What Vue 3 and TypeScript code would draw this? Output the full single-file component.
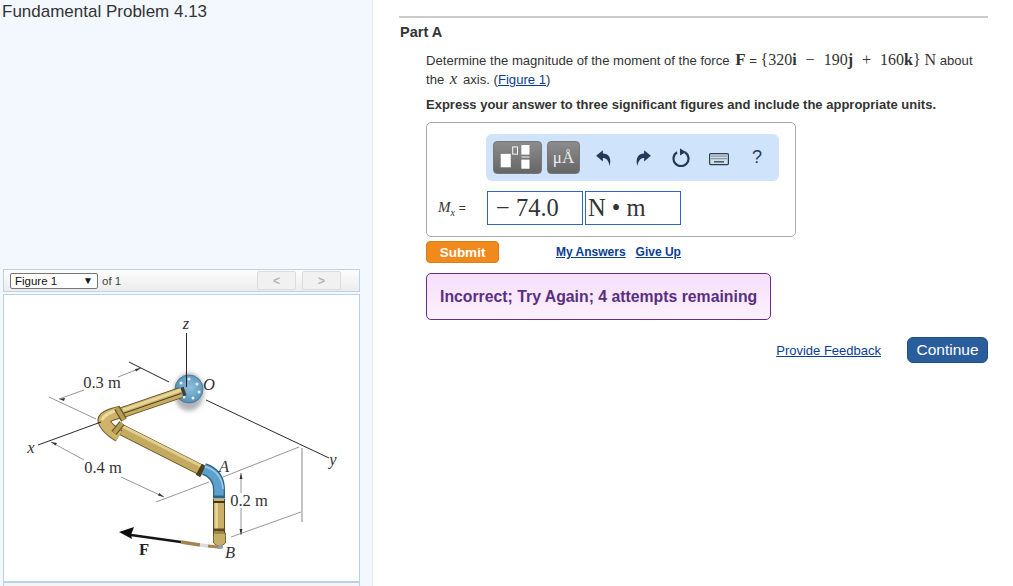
<script setup lang="ts">
const labels = [
  { t: 'z', x: 185, y: 329, cls: 'it' },
  { t: 'O', x: 208, y: 390, cls: 'it' },
  { t: '0.3 m', x: 101, y: 388, cls: '' },
  { t: '0.4 m', x: 102, y: 473, cls: '' },
  { t: '0.2 m', x: 248, y: 506, cls: '' },
  { t: 'x', x: 30, y: 453, cls: 'it' },
  { t: 'y', x: 332, y: 465, cls: 'it' },
  { t: 'A', x: 223, y: 472, cls: 'it' },
  { t: 'B', x: 229, y: 558, cls: 'it' },
  { t: 'F', x: 143, y: 555, cls: 'bd' },
]

const blackLines = [
  [128, 362, 168, 382],
  [205, 400, 328, 458],
  [37, 445, 100, 422],
  [185.5, 333, 185.5, 387],
]

const grayLines = [
  [48, 397, 95, 419],
  [58, 399, 83, 390],
  [117, 377, 140, 368],
  [50, 442, 83, 460],
  [120, 477, 163, 497],
  [155, 502, 208, 482],
  [222, 477, 298, 447],
  [230, 537, 300, 512],
  [240, 473, 240, 493],
  [240, 508, 240, 535],
]

const bolts = [
  [180, 383], [188, 379], [196, 384], [198, 392], [192, 398], [183, 397],
]
</script>

<template>
  <div class="page">
    <aside class="left">
      <h1 class="title">Fundamental Problem 4.13</h1>
      <div class="fig-bar">
        <div class="select">
          <span>Figure 1</span>
          <span class="caret">▼</span>
        </div>
        <span class="of">of 1</span>
        <div class="pager">
          <button class="page-btn">&lt;</button>
          <button class="page-btn">&gt;</button>
        </div>
      </div>
      <div class="fig-box">
        <svg class="fig" viewBox="3 295 355 286" width="355" height="286">
          <defs>
            <radialGradient id="flange" cx="0.55" cy="0.45" r="0.6">
              <stop offset="0" stop-color="#8fc0dc" />
              <stop offset="1" stop-color="#4f8cb4" />
            </radialGradient>
            <filter id="soft" x="-20%" y="-20%" width="140%" height="140%">
              <feGaussianBlur stdDeviation="0.35" />
            </filter>
            <filter id="shadow" x="-30%" y="-30%" width="160%" height="160%">
              <feGaussianBlur stdDeviation="2" />
            </filter>
          </defs>

          <g stroke="#8a8a8a" stroke-width="0.9" fill="none">
            <line v-for="(l, i) in grayLines" :key="i" :x1="l[0]" :y1="l[1]" :x2="l[2]" :y2="l[3]" />
          </g>
          <line x1="301" y1="448" x2="301" y2="522" stroke="#aaa" stroke-width="1.4" />
          <g fill="#333">
            <path d="M58 399l6-1-1 3zM140 368l-6 1 1 2.500zM50 442l6 1-1.500 2.500zM163 497l-6-1.500 1.200-2.500zM240 473l-1.500 6h3zM240 535l-1.500-6h3z" />
          </g>

          <g filter="url(#soft)">
            <ellipse cx="188" cy="392" rx="15" ry="19" fill="#b4b4b8" filter="url(#shadow)" />
            <ellipse cx="188" cy="389" rx="14" ry="14" fill="url(#flange)" stroke="#3d6f94" stroke-width="0.8" />
            <circle v-for="(b, i) in bolts" :key="i" :cx="b[0]" :cy="b[1]" r="1.500" fill="#e8eef2" />

            <!-- pipe O to elbow -->
            <line x1="180" y1="392.500" x2="120" y2="413" stroke="#5e4d22" stroke-width="11" />
            <line x1="180" y1="392.500" x2="120" y2="413" stroke="#c6ab63" stroke-width="9.500" />
            <line x1="180" y1="390" x2="122" y2="410" stroke="#e6d698" stroke-width="3" />
            <line x1="180" y1="393.500" x2="122" y2="413.500" stroke="#4a3c18" stroke-width="1" />
            <line x1="181" y1="392" x2="184" y2="391" stroke="#3f3a2a" stroke-width="9" />

            <!-- pipe elbow to A -->
            <line x1="117" y1="428" x2="200" y2="470" stroke="#5e4d22" stroke-width="11" />
            <line x1="117" y1="428" x2="200" y2="470" stroke="#c4a960" stroke-width="9.500" />
            <line x1="119" y1="425" x2="201" y2="466.500" stroke="#e3d08e" stroke-width="2.800" />

            <!-- elbow -->
            <path d="M120 412Q102 416 103 421Q105 428 118 436" fill="none" stroke="#6a5827" stroke-width="13" stroke-linecap="butt" />
            <path d="M120 412Q102 416 103 421Q105 428 118 436" fill="none" stroke="#cfb36a" stroke-width="11" />
            <path d="M120 409Q104 413 101 420" fill="none" stroke="#ecdca0" stroke-width="3" />
            <line x1="116" y1="408" x2="123" y2="420" stroke="#6b5a28" stroke-width="6.500" />
            <line x1="116" y1="408" x2="123" y2="420" stroke="#b79c54" stroke-width="4" />
            <line x1="113" y1="433" x2="121" y2="423" stroke="#6b5a28" stroke-width="6.500" />
            <line x1="113" y1="433" x2="121" y2="423" stroke="#b79c54" stroke-width="4" />

            <line x1="197" y1="476" x2="203" y2="465" stroke="#4c3f1b" stroke-width="5" />

            <!-- blue elbow -->
            <path d="M203 469Q218 474 218 490V496" fill="none" stroke="#2f6486" stroke-width="12" />
            <path d="M203 469Q218 474 218 490V496" fill="none" stroke="#5ba0cb" stroke-width="9.500" />
            <path d="M204 466.500Q221 472 222 489" fill="none" stroke="#9fcde6" stroke-width="1.500" />
            <line x1="212" y1="497" x2="224" y2="497" stroke="#2f6486" stroke-width="3" />

            <!-- lower pipe -->
            <line x1="218" y1="499" x2="218" y2="536" stroke="#5e4d22" stroke-width="12" />
            <line x1="218" y1="499" x2="218" y2="536" stroke="#cbb069" stroke-width="10" />
            <line x1="215.500" y1="503" x2="215.500" y2="532" stroke="#ead99b" stroke-width="2.500" />
            <line x1="212" y1="502" x2="224" y2="502" stroke="#3f3415" stroke-width="2" />
            <line x1="212" y1="530" x2="224" y2="530" stroke="#5a4a20" stroke-width="3" />
            <path d="M212.500 533h12v10q-6 6-12 0z" fill="#c8ad66" stroke="#5e4d22" stroke-width="0.8" />
            <ellipse cx="219" cy="547" rx="3" ry="2" fill="#8fa3b5" />

            <!-- force -->
            <path d="M180 542L130 535" stroke="#151515" stroke-width="2.400" />
            <path d="M118 532L133 527L130 535L131 539Z" fill="#111" />
            <line x1="180" y1="542" x2="199" y2="545" stroke="#a5834f" stroke-width="3.500" />
            <line x1="199" y1="545" x2="207" y2="546" stroke="#dcdcdc" stroke-width="3.500" />
            <line x1="207" y1="546" x2="217" y2="547" stroke="#a5834f" stroke-width="3" />
          </g>

          <g stroke="#111" stroke-width="0.9">
            <line v-for="(l, i) in blackLines" :key="i" :x1="l[0]" :y1="l[1]" :x2="l[2]" :y2="l[3]" />
          </g>

          <text v-for="l in labels" :key="l.t" :x="l.x" :y="l.y" text-anchor="middle" class="lbl" :class="l.cls">{{ l.t }}</text>
        </svg>
      </div>
      <div class="fig-foot"></div>
    </aside>

    <main class="right">
      <div class="rule"></div>
      <h2 class="part">Part A</h2>
      <div class="body">
        <p class="q">
          Determine the magnitude of the moment of the force
          <span class="m force"><b>F</b></span> = <span class="m">{320<b>i</b><span class="op">−</span>190<b>j</b><span class="op">+</span>160<b>k</b>} N</span> about
          the <span class="m var"><i>x</i></span> axis. (<a class="link">Figure 1</a>)
        </p>
        <p class="ask">Express your answer to three significant figures and include the appropriate units.</p>

        <div class="answer">
          <div class="tools">
            <button class="tbtn wide">
              <svg width="49" height="33" viewBox="0 0 49 33">
                <rect x="7" y="12.700" width="10.500" height="14" fill="#fff" />
                <rect x="19.500" y="5.500" width="5" height="7.500" fill="none" stroke="#fff" />
                <rect x="28.500" y="3.500" width="8.500" height="10" fill="#fff" />
                <rect x="28.500" y="15.500" width="8.500" height="1" fill="#fff" />
                <rect x="28.500" y="18.700" width="8.500" height="9.500" fill="#fff" />
              </svg>
            </button>
            <button class="tbtn unit">μÅ</button>
            <svg class="ico undo" width="18" height="18" viewBox="0 0 16 16">
              <path d="M1 6L7 1V4C12 4 15 8 13 15C12 10 10 8 7 8V11Z" fill="#223a55" />
            </svg>
            <svg class="ico redo" width="18" height="18" viewBox="0 0 16 16">
              <path d="M15 6L9 1V4C4 4 1 8 3 15C4 10 6 8 9 8V11Z" fill="#223a55" />
            </svg>
            <svg class="ico reset" width="18" height="19" viewBox="0 0 18 19">
              <path d="M5 4.300A7.500 7.500 0 1 0 13 4.300" fill="none" stroke="#223a55" stroke-width="2.200" />
              <path d="M8 0.500L14 4L8 7.500Z" fill="#223a55" />
            </svg>
            <svg class="ico kbd" width="20" height="13" viewBox="0 0 20 13">
              <rect x="0.600" y="0.600" width="18.800" height="11" rx="1" fill="#d3dde6" stroke="#2c3f52" stroke-width="1.200" />
              <path d="M2.500 3.200h15M2.500 5.700h15" stroke="#40566b" stroke-width="1.300" stroke-dasharray="1 1" />
              <path d="M5 8.800h10" stroke="#40566b" stroke-width="1.500" />
            </svg>
            <span class="help">?</span>
          </div>
          <div class="row">
            <span class="mx"><i>M<sub>x</sub></i> <span class="eq">=</span></span>
            <div class="input">− 74.0</div>
            <div class="input unit-in">N • m</div>
          </div>
        </div>

        <div class="actions">
          <button class="submit">Submit</button>
          <a class="link small">My Answers</a>
          <a class="link small">Give Up</a>
        </div>

        <div class="feedback">Incorrect; Try Again; 4 attempts remaining</div>
      </div>

      <div class="bottom">
        <a class="link pf">Provide Feedback</a>
        <button class="continue">Continue</button>
      </div>
    </main>
  </div>
</template>

<style>
html,
body {
  margin: 0;
  background: #fff;
}
</style>

<style scoped>
.page {
  display: flex;
  width: 1013px;
  height: 586px;
  overflow: hidden;
  font-family: "Liberation Sans", Arial, sans-serif;
  color: #333;
}

.left {
  width: 373px;
  height: 586px;
  flex: none;
  background: #f3f8ff;
  border-right: 1px solid #e6ebf2;
  box-sizing: border-box;
  padding: 3px 0 0 3px;
}

.title {
  margin: 0 0 0 -1px;
  height: 266px;
  font-size: 17px;
  line-height: 18px;
  font-weight: normal;
  color: #333;
}

.fig-bar {
  width: 357px;
  height: 23px;
  box-sizing: border-box;
  border: 1px solid #bcd0e6;
  background: linear-gradient(#fdfdfd, #ececec);
  display: flex;
  align-items: center;
  padding-left: 6px;
}

.select {
  width: 88px;
  height: 16px;
  box-sizing: border-box;
  border: 1px solid #767676;
  border-radius: 2px;
  background: #fff;
  font-size: 11.5px;
  line-height: 14px;
  color: #111;
  padding-left: 4px;
  display: flex;
  justify-content: space-between;
}

.caret {
  font-size: 10px;
  margin-right: 4px;
  color: #111;
}

.of {
  font-size: 11.500px;
  margin-left: 4px;
  color: #444;
}

.pager {
  margin-left: auto;
  margin-right: 18px;
  display: flex;
  gap: 6px;
}

.page-btn {
  width: 39px;
  height: 19px;
  padding: 0;
  border: 1px solid #dcdcdc;
  border-radius: 2px;
  background: #f1f1f1;
  color: #b5b5b5;
  font: bold 12px "Liberation Sans", sans-serif;
}

.fig-box {
  width: 357px;
  height: 288px;
  margin-top: 2px;
  box-sizing: border-box;
  border: 1px solid #bcd0e6;
  background: #fff;
}

.fig {
  display: block;
}

.lbl {
  font-family: "Liberation Serif", serif;
  font-size: 16.5px;
  fill: #333;
}

.it {
  font-style: italic;
}

.bd {
  font-weight: bold;
  fill: #222;
}

.fig-foot {
  width: 357px;
  height: 10px;
  box-sizing: border-box;
  border: 1px solid #bcd0e6;
  background: #f5f5f5;
}

.right {
  flex: 1;
  padding: 16px 25px 0 26px;
  box-sizing: border-box;
}

.rule {
  height: 2px;
  background: #ccc;
}

.part {
  margin: 6px 0 0 1px;
  font-size: 14.5px;
  line-height: 16px;
  font-weight: bold;
  color: #333;
}

.body {
  margin-left: 27px;
}

.q {
  margin: 11px 0 0;
  font-size: 13.1px;
  line-height: 18px;
  width: 556px;
}

.m {
  font-family: "Liberation Serif", serif;
  font-size: 16px;
  line-height: 1;
}

.force {
  font-size: 17px;
  margin-left: 2px;
}

.var {
  font-size: 17px;
  margin: 0 2px;
}

.op {
  margin: 0 9px;
}

.link {
  color: #0b3d91;
  text-decoration: underline;
}

.ask {
  margin: 7px 0 0;
  font-size: 13px;
  line-height: 18px;
  font-weight: bold;
}

.answer {
  width: 370px;
  height: 115px;
  margin-top: 8px;
  box-sizing: border-box;
  border: 1px solid #aaa;
  border-radius: 5px;
  padding: 11px 16px 0 11px;
}

.tools {
  margin-left: 48px;
  width: 293px;
  height: 47px;
  background: #cfe3fb;
  border-radius: 6px;
  display: flex;
  align-items: center;
  padding-left: 7px;
  box-sizing: border-box;
}

.tbtn {
  height: 33px;
  padding: 0;
  border: 1px solid #777;
  border-radius: 4px;
  background: linear-gradient(#8c8c8c, #666);
  color: #eee;
  display: flex;
  align-items: center;
  justify-content: center;
  box-sizing: border-box;
}

.wide {
  width: 49px;
}

.unit {
  width: 33px;
  margin-left: 5px;
  font-family: "Liberation Serif", serif;
  font-size: 17px;
}

.ico {
  flex: none;
}

.undo {
  margin-left: 15px;
}

.redo {
  margin-left: 21px;
}

.reset {
  margin-left: 20px;
}

.kbd {
  margin-left: 19px;
  margin-top: 3px;
}

.help {
  margin-left: 23px;
  font-size: 18px;
  color: #223a55;
}

.row {
  display: flex;
  align-items: center;
  margin-top: 10px;
}

.mx {
  width: 49px;
  font-family: "Liberation Serif", serif;
  font-size: 15px;
  color: #333;
}

.mx sub {
  font-size: 10px;
}

.eq {
  font-family: "Liberation Sans", sans-serif;
  font-size: 12px;
}

.input {
  width: 96px;
  height: 34px;
  box-sizing: border-box;
  border: 1px solid #2f66c0;
  font-family: "Liberation Serif", serif;
  font-size: 24.5px;
  line-height: 31px;
  padding-left: 8px;
  color: #333;
}

.unit-in {
  margin-left: 2px;
  padding-left: 2px;
}

.actions {
  display: flex;
  align-items: center;
  margin-top: 4px;
  height: 22px;
  font-size: 12px;
  font-weight: bold;
}

.submit {
  width: 73px;
  height: 22px;
  padding: 0;
  border: 1px solid #d97e1a;
  border-radius: 4px;
  background: #f08a1d;
  color: #fff;
  font: bold 13.5px "Liberation Sans", sans-serif;
  margin-right: 57px;
}

.small {
  margin-right: 10px;
}

.feedback {
  width: 345px;
  height: 47px;
  margin-top: 10px;
  box-sizing: border-box;
  border: 1px solid #6b2a8d;
  border-radius: 5px;
  background: linear-gradient(#f5dffb, #fdf1ff);
  color: #5a2f80;
  font-size: 15.8px;
  font-weight: bold;
  line-height: 45px;
  padding-left: 13px;
}

.bottom {
  display: flex;
  justify-content: flex-end;
  align-items: center;
  margin-top: 17px;
}

.pf {
  font-size: 13px;
  margin-right: 26px;
}

.continue {
  width: 81px;
  height: 26px;
  padding: 0;
  border: 1px solid #1e4f8c;
  border-radius: 6px;
  background: #2a5d9c;
  color: #fff;
  font: 15.5px "Liberation Sans", sans-serif;
}
</style>
